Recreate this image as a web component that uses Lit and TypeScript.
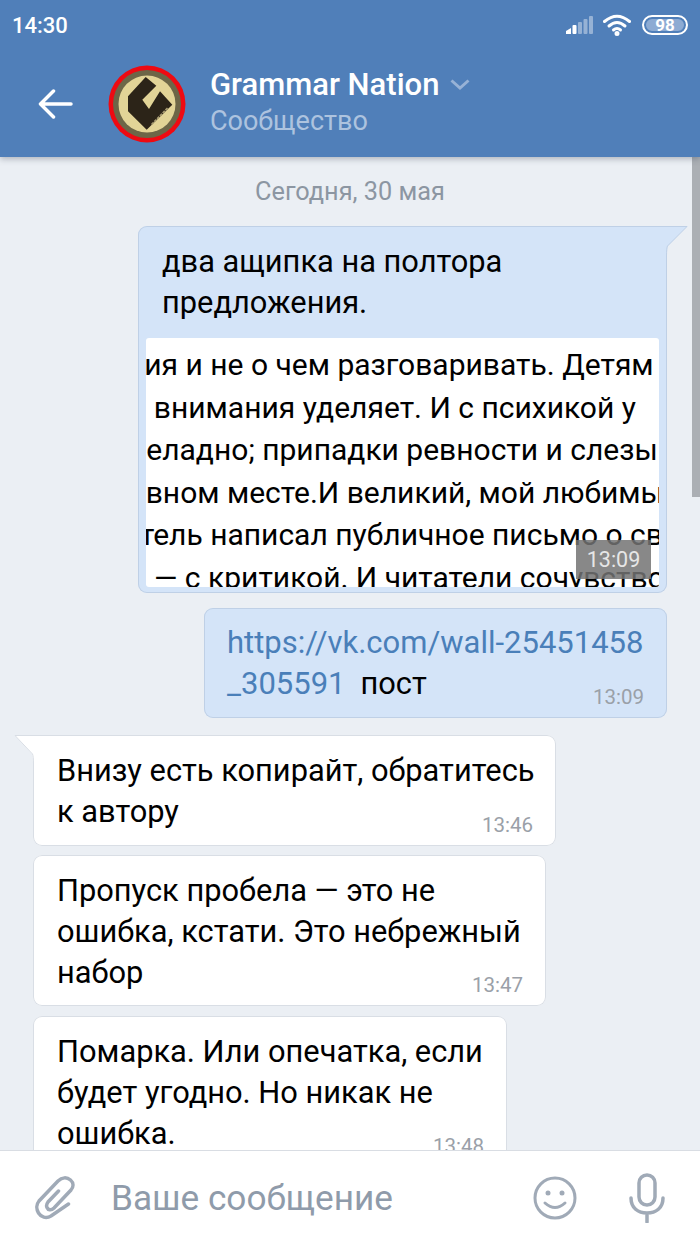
import { LitElement, css, html } from 'lit';
import { customElement } from 'lit/decorators.js';

const snippetLines = [
  { text: 'ния и не о чем разговаривать. Детям', shift: -19 },
  { text: 'го внимания уделяет. И с психикой у', shift: -29 },
  { text: 'неладно; припадки ревности и слезы', shift: -17 },
  { text: 'главном месте.И великий, мой любимый', shift: -46 },
  { text: 'читатель написал публичное письмо о свой', shift: -70 },
  { text: '— с критикой. И читатели сочувствовали', shift: 8 },
];

@customElement('app-root')
export class AppRoot extends LitElement {
  static styles = css`
    :host {
      display: block;
      width: 700px;
      height: 1244px;
      overflow: hidden;
      font-family: Roboto, sans-serif;
      background: #ebeff4;
    }

    .page {
      position: relative;
      display: flex;
      flex-direction: column;
      height: 1244px;
    }

    /* header */
    .top {
      flex: none;
      height: 157px;
      background: #507fb9;
      box-shadow: 0 2px 6px rgba(60, 70, 85, 0.35);
      position: relative;
      z-index: 2;
      color: #fff;
    }

    .status {
      height: 50px;
      display: flex;
      align-items: center;
      padding: 0 12px;
    }

    .clock {
      font-size: 22px;
      font-weight: 500;
      flex: 1;
    }

    .signal {
      margin-right: 10px;
    }

    .wifi {
      margin-right: 11px;
    }

    .battery {
      width: 42px;
      height: 16px;
      border: 2px solid #fff;
      border-radius: 10px;
      display: flex;
      align-items: center;
      justify-content: center;
      font-size: 17px;
      font-weight: 700;
      line-height: 16px;
      box-shadow: inset 0 0 0 2px #507fb9;
      background-color: #8dabd3;
    }

    .bar {
      display: flex;
      align-items: center;
      height: 107px;
      padding: 0 0 0 38px;
    }

    .back {
      display: block;
      margin-right: 35px;
    }

    .avatar {
      display: block;
      margin-right: 24px;
    }

    .title {
      display: flex;
      flex-direction: column;
      padding-bottom: 2px;
    }

    .name-row {
      display: flex;
      align-items: center;
      gap: 11px;
      font-size: 31px;
      line-height: 36px;
      font-weight: 500;
    }

    .sub {
      font-size: 27px;
      line-height: 36px;
      color: #adc3df;
    }

    /* chat */
    .chat {
      flex: 1;
      min-height: 0;
      overflow: hidden;
      display: flex;
      flex-direction: column;
      align-items: flex-start;
      position: relative;
    }

    .date {
      align-self: center;
      font-size: 25.300px;
      line-height: 26px;
      height: 26px;
      margin: 22px 0 21px;
      color: #8c96a2;
    }

    .bubble {
      flex: none;
      position: relative;
      box-sizing: border-box;
      border-radius: 9px;
      font-size: 30.800px;
      line-height: 41px;
      color: #000;
    }

    .out {
      background: #d4e4f8;
      box-shadow: inset 0 0 0 1px #bfd0e6;
      align-self: flex-end;
      margin-right: 33px;
    }

    .in {
      background: #fff;
      box-shadow: inset 0 0 0 1px #d9dee5;
      margin-left: 33px;
    }

    .tail {
      position: absolute;
      top: 0;
      display: block;
    }

    .tail.right {
      right: -21px;
    }

    .tail.left {
      left: -19px;
    }

    .first-out {
      width: 529px;
      height: 367px;
      margin-bottom: 15px;
      padding: 15px 8px 8px;
      border-top-right-radius: 0;
    }

    .first-out p {
      margin: 0 0 15px;
      padding-left: 16px;
    }

    .snippet {
      position: relative;
      height: 249px;
      background: #fff;
      border-radius: 3px;
      overflow: hidden;
      padding-top: 6px;
      box-sizing: border-box;
      font-size: 30px;
      line-height: 42.600px;
    }

    .snippet div {
      white-space: nowrap;
    }

    .snippet .time-chip {
      position: absolute;
      right: 8px;
      bottom: 8px;
      width: 75px;
      height: 39px;
      background: rgba(115, 115, 115, 0.85);
      color: #e6e6e6;
      font-size: 21.500px;
      line-height: 40px;
      text-align: center;
    }

    .link-msg {
      width: 463px;
      height: 110px;
      margin-bottom: 17px;
      padding: 14px 16px 0 23px;
    }

    .link-msg a {
      color: #4a7fb9;
      text-decoration: none;
      font-size: 31px;
    }

    .link-msg .word {
      margin-left: 15px;
    }

    .time {
      position: absolute;
      right: 23px;
      bottom: 9px;
      font-size: 20.500px;
      line-height: 24px;
      color: #9aa0a8;
    }

    .first-in {
      width: 523px;
      height: 111px;
      margin-bottom: 9px;
      padding: 15px 0 0 24px;
      border-top-left-radius: 0;
    }

    .second-in {
      width: 513px;
      height: 151px;
      margin-bottom: 10px;
      padding: 15px 0 0 24px;
    }

    .third-in {
      width: 474px;
      height: 151px;
      padding: 15px 0 0 24px;
    }

    .scroll {
      position: absolute;
      top: 0;
      right: 0;
      width: 8px;
      height: 340px;
      background: #abafb4;
    }

    /* composer */
    .composer {
      flex: none;
      height: 93px;
      border-top: 1px solid #d9dde3;
      background: #fff;
      display: flex;
      align-items: center;
      position: relative;
      z-index: 2;
      padding: 0 35px 0 35px;
      color: #8f9baa;
    }

    .clip {
      display: block;
      flex: none;
    }

    .placeholder {
      flex: 1;
      font-size: 35.200px;
      margin-left: 36px;
      padding-top: 1px;
    }

    .smile {
      display: block;
      margin-right: 52px;
    }
  `;

  private tail(side: 'left' | 'right', fill: string, edge: string) {
    const shape =
      side === 'right' ? 'M0 0H21.500L2 20Q1 21.500 1 30H0Z' : 'M20 0H.5L18 19Q19 21 19 30H20Z';
    const line =
      side === 'right' ? 'M0 .5H21L1.500 20Q.5 21.500 .5 30' : 'M20 .5H1L18.500 19Q19.500 21 19.500 30';
    return html`<svg class="tail ${side}" width=${side === 'right' ? 22 : 20} height="30">
      <path d=${shape} fill=${fill}></path>
      <path d=${line} fill="none" stroke=${edge}></path>
    </svg>`;
  }

  private signalIcon() {
    return html`<svg class="signal" width="27" height="18" viewBox="0 0 27 18" fill="#fff">
      <path d="M0 18v-3l5-3v6z"></path>
      <rect x="6.500" y="9" width="4" height="9" rx="1"></rect>
      <rect x="12" y="6" width="4" height="12" rx="1" opacity="0.4"></rect>
      <rect x="17.500" y="3" width="4" height="15" rx="1" opacity="0.4"></rect>
      <rect x="23" y="0" width="4" height="18" rx="1" opacity="0.4"></rect>
    </svg>`;
  }

  private wifiIcon() {
    return html`<svg class="wifi" width="28" height="22" viewBox="0 0 28 22" fill="none" stroke="#fff" stroke-width="3" stroke-linecap="round">
      <path d="M1.500 7.500Q14 -3 26.500 7.500"></path>
      <path d="M6 12Q14 5 22 12"></path>
      <path d="M10.500 16Q14 13 17.500 16"></path>
      <circle cx="14" cy="19.500" r="1" fill="#fff"></circle>
    </svg>`;
  }

  private avatarIcon() {
    return html`<svg class="avatar" width="78" height="78" viewBox="0 0 78 78">
      <circle cx="39" cy="39" r="38.500" fill="#ee0a12"></circle>
      <circle cx="39" cy="39" r="34" fill="#6d6647"></circle>
      <circle cx="39" cy="39" r="28.500" fill="#e2d497"></circle>
      <path d="M37.700 12 48.300 20.700 34.300 34.700 41 44 52 26.300 64.300 39.700 38.700 64.700 20 46.300V31.300Z" fill="#2c2418"></path>
      <path d="M43.500 59.500 59.500 43" stroke="#a89c72" stroke-width="1.500" stroke-dasharray="3 1"></path>
    </svg>`;
  }

  render() {
    return html`
      <div class="page">
        <header class="top">
          <div class="status">
            <span class="clock">14:30</span>
            ${this.signalIcon()} ${this.wifiIcon()}
            <span class="battery">98</span>
          </div>
          <div class="bar">
            <svg class="back" width="35" height="30" viewBox="0 0 35 30" fill="none" stroke="#fff" stroke-width="3.500" stroke-linecap="round" stroke-linejoin="round">
              <path d="M33 15H3M15.500 2 2.500 15l13 13"></path>
            </svg>
            ${this.avatarIcon()}
            <div class="title">
              <div class="name-row">
                <span>Grammar Nation</span>
                <svg width="20" height="12" viewBox="0 0 20 12" fill="none" stroke="#97b2d6" stroke-width="3">
                  <path d="M1.500 1.500 10 9l8.500-7.500"></path>
                </svg>
              </div>
              <div class="sub">Сообщество</div>
            </div>
          </div>
        </header>

        <main class="chat">
          <div class="date">Сегодня, 30 мая</div>

          <div class="bubble out first-out">
            ${this.tail('right', '#d4e4f8', '#bfd0e6')}
            <p>два ащипка на полтора<br />предложения.</p>
            <div class="snippet">
              ${snippetLines.map(
                (line) => html`<div style="margin-left: ${line.shift}px">${line.text}</div>`,
              )}
              <span class="time-chip">13:09</span>
            </div>
          </div>

          <div class="bubble out link-msg">
            <a href="#">https://vk.com/wall-25451458<br />_305591</a><span class="word">пост</span>
            <span class="time">13:09</span>
          </div>

          <div class="bubble in first-in">
            ${this.tail('left', '#fff', '#d9dee5')}
            Внизу есть копирайт, обратитесь<br />к автору
            <span class="time">13:46</span>
          </div>

          <div class="bubble in second-in">
            Пропуск пробела — это не<br />ошибка, кстати. Это небрежный<br />набор
            <span class="time">13:47</span>
          </div>

          <div class="bubble in third-in">
            Помарка. Или опечатка, если<br />будет угодно. Но никак не<br />ошибка.
            <span class="time">13:48</span>
          </div>

          <div class="scroll"></div>
        </main>

        <footer class="composer">
          <svg class="clip" width="40" height="44" viewBox="0 0 40 44" fill="none" stroke="#a0aab7" stroke-width="3.500" stroke-linecap="round">
            <path d="M33.500 28 16 40C11 43 6 41 3.500 37 1 33 1.500 28 4 25L23 5C27 1 32 1 35.500 4 39 7 38.500 11 36 14L19 32C16 35 13 34 12 31.500 11 29.500 11.500 28 13 26L23.500 15"></path>
          </svg>
          <span class="placeholder">Ваше сообщение</span>
          <svg class="smile" width="44" height="44" viewBox="0 0 44 44" fill="none" stroke="#a0aab7" stroke-width="3">
            <circle cx="22" cy="22" r="20"></circle>
            <circle cx="15" cy="17" r="2.500" fill="#a0aab7" stroke="none"></circle>
            <circle cx="29" cy="17" r="2.500" fill="#a0aab7" stroke="none"></circle>
            <path d="M12 27Q22 36 32 27" stroke-linecap="round"></path>
          </svg>
          <svg width="36" height="50" viewBox="0 0 36 50" fill="none" stroke="#a0aab7" stroke-width="3.500" stroke-linecap="round">
            <rect x="10" y="2" width="16" height="30" rx="8"></rect>
            <path d="M2 25c0 10 7 15 16 15s16-5 16-15M18 40v9"></path>
          </svg>
        </footer>
      </div>
    `;
  }
}
